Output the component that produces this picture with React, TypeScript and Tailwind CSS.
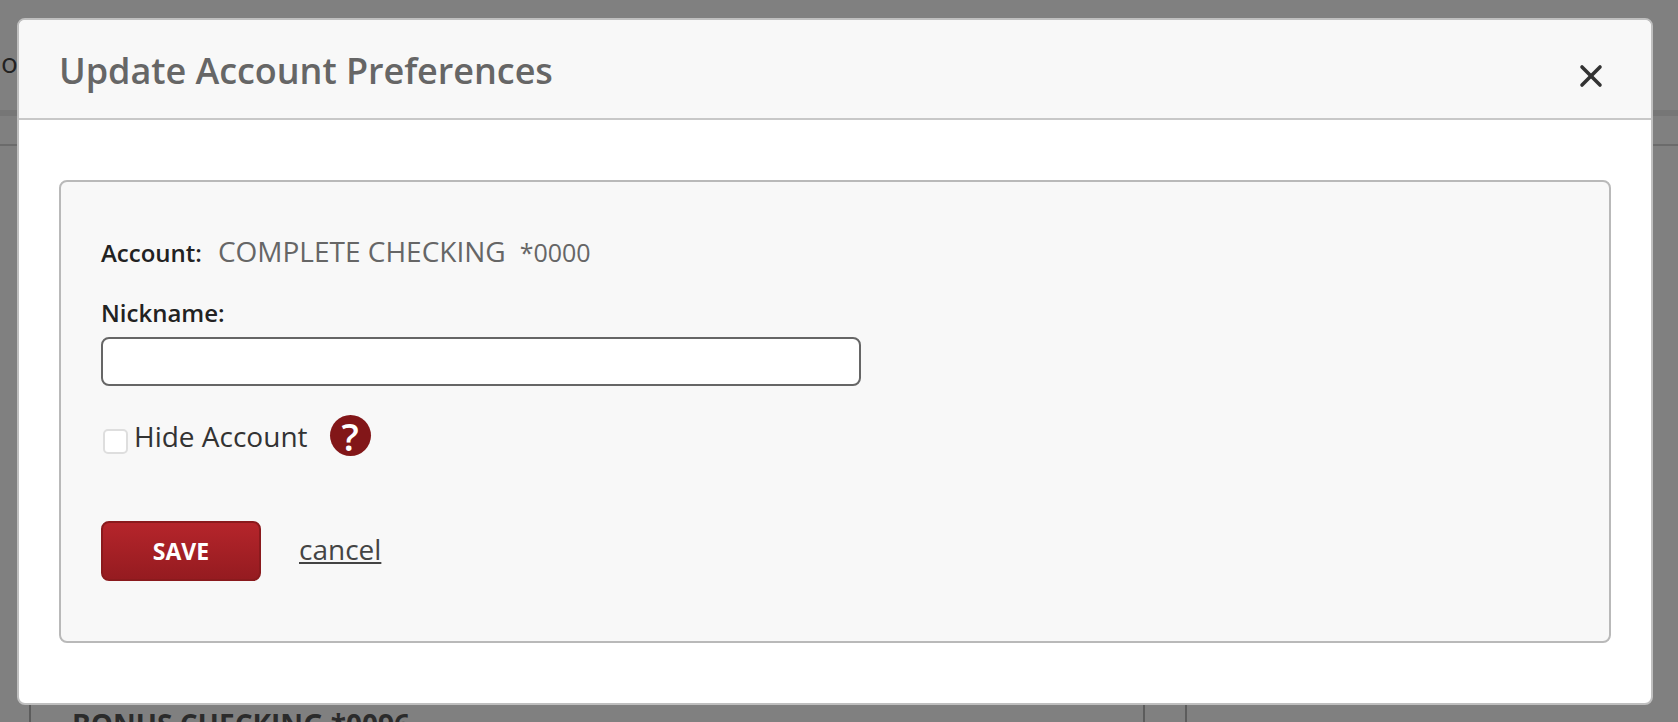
import { X } from "lucide-react";

function BackgroundPage() {
  return (
    <div className="relative flex h-[722px] w-full flex-col overflow-hidden bg-[#808080] text-[#1c1c1c]">
      <div className="h-[110px] pt-[43px] pl-px text-[28px] leading-[38px] text-[#222222]">o</div>
      <div className="h-[6px] bg-[#767676]" />
      <div className="h-[30px] border-b-2 border-[#6b6b6b]" />
      <div className="flex flex-1 items-end pl-[29px]">
        <div className="h-[17px] w-[1116px] overflow-hidden border-x-2 border-[#5c5c5c] pl-[41px]">
          <span className="block text-[28px] font-bold leading-[38px] whitespace-nowrap text-[#2b2b2b]">BONUS CHECKING *0096</span>
        </div>
        <div className="ml-[40px] h-[17px] w-[2px] bg-[#5c5c5c]" />
      </div>
    </div>
  );
}

export default function App() {
  return (
    <div className="relative font-['Open_Sans',sans-serif]">
      <BackgroundPage />
      <div className="absolute left-[17px] top-[18px] flex h-[687px] w-[1636px] flex-col overflow-hidden rounded-[8px] border-2 border-[#bfbfbf] bg-white">
        <div className="flex h-[100px] shrink-0 items-start justify-between border-b-2 border-[#c8c8c8] bg-[#f8f8f8] pl-[40px] pr-[42px]">
          <h2 className="pt-[26px] text-[36px] font-semibold leading-[50px] tracking-[-0.05px] text-[#666666]">Update Account Preferences</h2>
          <button className="mt-[38px] text-[#333333]" aria-label="Close">
            <X className="h-[36px] w-[36px]" strokeWidth={2.4} />
          </button>
        </div>
        <div className="px-[40px] pt-[60px]">
          <div className="flex h-[463px] flex-col rounded-[8px] border-2 border-[#b9b9b9] bg-[#f8f8f8] px-[40px] pt-[54px]">
            <div className="flex items-baseline">
              <span className="text-[24px] font-semibold leading-[30px] text-[#222222]">Account:</span>
              <span className="ml-[16px] text-[28px] leading-[30px] text-[#666666]">COMPLETE CHECKING</span>
              <span className="ml-[14px] text-[25px] leading-[30px] text-[#666666]">*0000</span>
            </div>
            <label className="mt-[30px] text-[24px] font-semibold leading-[30px] text-[#222222]">Nickname:</label>
            <input className="mt-[9px] h-[49px] w-[760px] rounded-[8px] border-2 border-[#666666] bg-white" />
            <div className="mt-[29px] flex items-center">
              <span className="ml-[2px] h-[25px] w-[25px] translate-y-[6px] rounded-[5px] border-2 border-[#dedede] bg-white" />
              <span className="ml-[6px] text-[28px] leading-[38px] text-[#333333]">Hide Account</span>
              <span className="ml-[22px] flex h-[41px] w-[41px] items-center justify-center rounded-full bg-[#821618] text-[38px] font-semibold leading-none text-white">?</span>
            </div>
            <div className="mt-[65px] flex items-center">
              <button className="h-[60px] w-[160px] rounded-[8px] border-2 border-[#8a1a1d] bg-gradient-to-b from-[#b5252b] to-[#951b20] text-[23px] font-bold text-white">SAVE</button>
              <a className="ml-[38px] -translate-y-[2px] text-[28px] text-[#444444] underline">cancel</a>
            </div>
          </div>
        </div>
      </div>
    </div>
  );
}
